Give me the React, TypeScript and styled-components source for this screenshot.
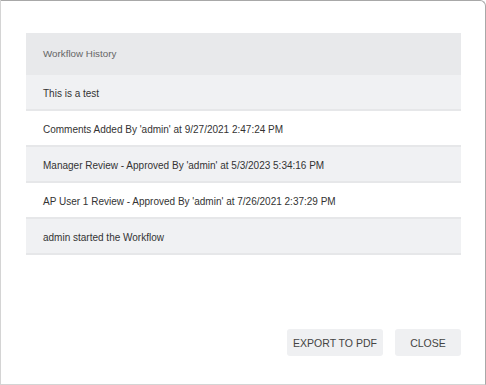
import React from "react";
import { styled, createGlobalStyle } from "styled-components";

const GlobalStyle = createGlobalStyle`
  html, body {
    margin: 0;
    padding: 0;
    background: #ffffff;
  }
  body {
    font-family: "Liberation Sans", Arial, sans-serif;
  }
`;

const entries = [
  "This is a test",
  "Comments Added By 'admin' at 9/27/2021 2:47:24 PM",
  "Manager Review - Approved By 'admin' at 5/3/2023 5:34:16 PM",
  "AP User 1 Review - Approved By 'admin' at 7/26/2021 2:37:29 PM",
  "admin started the Workflow",
];

const App = () => {
  return (
    <>
      <GlobalStyle />
      <Dialog>
        <HistoryTable>
          <HeaderRow>Workflow History</HeaderRow>
          {entries.map((text, i) => (
            <EntryRow key={i} $shaded={i % 2 === 0}>
              {text}
            </EntryRow>
          ))}
        </HistoryTable>
        <Footer>
          <ActionButton $width={96}>EXPORT TO PDF</ActionButton>
          <ActionButton $width={66}>CLOSE</ActionButton>
        </Footer>
      </Dialog>
    </>
  );
};

const Dialog = styled.div`
  box-sizing: border-box;
  width: 486px;
  height: 385px;
  display: flex;
  flex-direction: column;
  justify-content: space-between;
  padding: 32px 24px 28px 25px;
  background: #ffffff;
  border: 1px solid #d4d4d4;
  border-top-color: #a8a8a8;
  border-right-color: #a8a8a8;
  border-radius: 0 6px 0 0;
`;

const HistoryTable = styled.div`
  display: flex;
  flex-direction: column;
`;

const HeaderRow = styled.div`
  box-sizing: border-box;
  height: 42px;
  display: flex;
  align-items: center;
  padding: 0 0 1px 17px;
  background: #e8e9eb;
  color: #666666;
  font-size: 9.8px;
`;

const EntryRow = styled.div<{ $shaded: boolean }>`
  box-sizing: border-box;
  height: 36px;
  display: flex;
  align-items: center;
  padding: 2px 0 0 17px;
  background: ${(p) => (p.$shaded ? "#f0f1f3" : "#ffffff")};
  border-bottom: 2px solid #e6e7e9;
  color: #333333;
  font-size: 10px;
`;

const Footer = styled.div`
  display: flex;
  justify-content: flex-end;
  gap: 12px;
`;

const ActionButton = styled.button<{ $width: number }>`
  width: ${(p) => p.$width}px;
  height: 27px;
  padding: 0;
  border: none;
  border-radius: 3px;
  background: #eff0f2;
  color: #444444;
  font-family: "Liberation Sans", Arial, sans-serif;
  font-size: 10.5px;
`;

export default App;
